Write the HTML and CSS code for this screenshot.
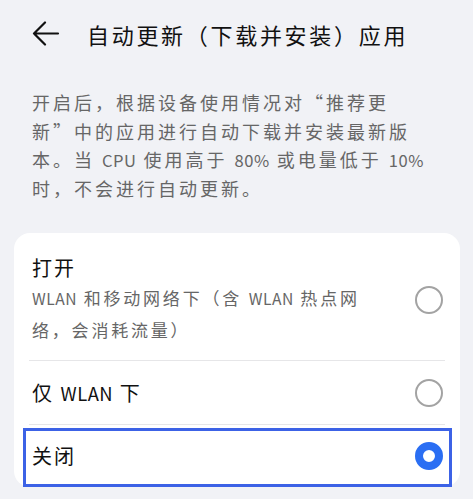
FILE: index.html
```html
<!doctype html>
<html lang="zh-CN">
 <head>
  <meta charset="UTF-8">
  <meta name="viewport" content="width=device-width, initial-scale=1.0">
  <title>自动更新（下载并安装）应用</title>
  <link rel="stylesheet" href="styles.css">
 </head>
 <body>
  <header class="top-bar">
   <button class="back-btn" type="button" aria-label="返回">
    <svg width="28" height="26" viewBox="0 0 28 26">
     <path d="M2 12.5 H26 M13 1.5 L2 12.5 L13 23.5" fill="none" stroke="#111" stroke-width="2.2" stroke-linecap="round" stroke-linejoin="round"/>
    </svg>
   </button>
   <h1>自动更新（下载并安装）应用</h1>
  </header>

  <p class="desc">开启后，根据设备使用情况对“推荐更<br>新”中的应用进行自动下载并安装最新版<br>本。当 <span class="lat">CPU</span> 使用高于 <span class="lat">80%</span> 或电量低于 <span class="lat">10%</span><br>时，不会进行自动更新。</p>

  <div class="option-card">
   <div class="option">
    <div class="option-text">
     <div class="option-title">打开</div>
     <div class="option-sub"><span class="lat">WLAN</span> 和移动网络下（含 <span class="lat">WLAN</span> 热点网<br>络，会消耗流量）</div>
    </div>
    <span class="radio"></span>
   </div>
   <div class="option">
    <div class="option-text">
     <div class="option-title">仅 <span class="lat">WLAN</span> 下</div>
    </div>
    <span class="radio"></span>
   </div>
   <div class="option focused">
    <div class="option-text">
     <div class="option-title">关闭</div>
    </div>
    <span class="radio checked"></span>
   </div>
  </div>
 </body>
</html>
```

FILE: styles.css
```css
body {
  margin: 0;
  padding: 0;
  background-color: #f1f2f6;
  color: #1a1a1a;
  font-family: "Noto Sans CJK SC", "Noto Sans", sans-serif;
}
.top-bar {
  display: flex;
  align-items: center;
  height: 68px;
  padding-left: 32px;
}
.back-btn {
  display: flex;
  padding: 0;
  border: 0;
  background: none;
  width: 28px;
  height: 26px;
  margin-right: 27px;
}
.top-bar h1 {
  margin: 0;
  font-size: 22px;
  font-weight: 400;
  letter-spacing: 2.7px;
  color: #111;
}
.desc {
  margin: 20px 0 0;
  padding-left: 32px;
  font-size: 18px;
  line-height: 28.5px;
  letter-spacing: 3px;
  color: #666;
  white-space: nowrap;
}
.lat {
  letter-spacing: 0.5px;
  font-size: 0.92em;
  line-height: 1;
}
.option-card {
  margin: 31px 13px 0 14px;
  background-color: #fff;
  border-radius: 16px;
}
.option {
  position: relative;
  display: flex;
  align-items: center;
  padding: 0 17px 0 18px;
  min-height: 63px;
}
.option + .option::before {
  content: '';
  position: absolute;
  top: -1px;
  left: 15px;
  right: 15px;
  height: 1px;
  background-color: #e6e6e8;
}
.option:first-child {
  padding-top: 21px;
  padding-bottom: 14px;
}
.option + .option {
  border-top: 1px solid transparent;
}
.option.focused {
  min-height: 62px;
}
.option.focused::after {
  content: '';
  position: absolute;
  top: 3px;
  bottom: 0;
  left: 9px;
  right: 8px;
  border: 3px solid #3c62e6;
}
.option-text {
  flex: 1;
}
.option-title {
  font-size: 20px;
  line-height: 28px;
  letter-spacing: 2px;
  color: #111;
}
.option-sub {
  font-size: 17px;
  line-height: 32px;
  letter-spacing: 2.8px;
  color: #666;
}
.radio {
  box-sizing: border-box;
  width: 28px;
  height: 28px;
  border: 2px solid #a3a3a3;
  border-radius: 50%;
}
.radio.checked {
  border: 8px solid #2a6ef3;
}
```
